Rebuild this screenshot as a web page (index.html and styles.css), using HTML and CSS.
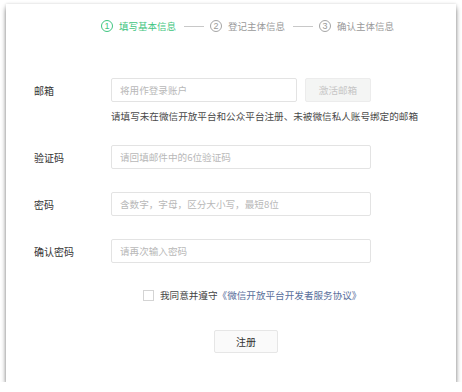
FILE: index.html
```html
<!DOCTYPE html>
<html lang="zh-CN">
<head>
<meta charset="UTF-8">
<title>注册 - 微信开放平台</title>
<meta name="viewport" content="width=device-width, initial-scale=1.0">
<link rel="stylesheet" href="styles.css">
</head>
<body>

<div class="card">
    <div class="steps">
        <div class="step active"><span class="num">1</span>填写基本信息</div>
        <span class="sep"></span>
        <div class="step"><span class="num">2</span>登记主体信息</div>
        <span class="sep"></span>
        <div class="step"><span class="num">3</span>确认主体信息</div>
    </div>

    <div class="form">
        <div class="row">
            <label class="label">邮箱</label>
            <input class="field short" type="text" placeholder="将用作登录账户">
            <button class="btn-activate" type="button">激活邮箱</button>
        </div>
        <p class="hint">请填写未在微信开放平台和公众平台注册、未被微信私人账号绑定的邮箱</p>

        <div class="row gap">
            <label class="label">验证码</label>
            <input class="field" type="text" placeholder="请回填邮件中的6位验证码">
        </div>

        <div class="row gap">
            <label class="label">密码</label>
            <input class="field" type="password" placeholder="含数字，字母，区分大小写，最短8位">
        </div>

        <div class="row gap">
            <label class="label">确认密码</label>
            <input class="field" type="password" placeholder="请再次输入密码">
        </div>

        <div class="agree">
            <span class="box"></span>
            <span>我同意并遵守<a href="#">《微信开放平台开发者服务协议》</a></span>
        </div>

        <div class="submit">
            <button class="btn-submit" type="button">注册</button>
        </div>
    </div>
</div>

</body>
</html>
```

FILE: styles.css
```css
body {
    margin: 0;
    background: #fff;
    font-family: "Noto Sans CJK SC", "Liberation Sans", sans-serif;
    font-size: 10px;
    color: #353535;
}

.card {
    margin: 4px 6px 0 6px;
    width: 450px;
    height: 378px;
    background: #fff;
    box-shadow: 0 4px 5px rgba(0,0,0,0.45), 0 0 3px rgba(0,0,0,0.15);
}

/* 상단 단계 표시 */
.steps {
    display: flex;
    align-items: center;
    padding: 16px 0 0 95px;
    height: 12px;
    color: #9a9a9a;
    line-height: 12px;
}

.step {
    display: flex;
    align-items: center;
    font-size: 9.5px;
}

.step .num {
    display: inline-flex;
    align-items: center;
    justify-content: center;
    width: 10px;
    height: 10px;
    border: 1px solid #a5a5a5;
    border-radius: 50%;
    font-family: "Liberation Sans", sans-serif;
    font-size: 9px;
    line-height: 10px;
    margin-right: 6px;
}

.step.active {
    color: #3fc580;
}

.step.active .num {
    border-color: #3fc580;
}

.sep {
    width: 20px;
    height: 1px;
    background: #c8c8c8;
    margin: 0 6px 0 8px;
}

/* 입력 폼 */
.form {
    margin-top: 46px;
}

.row {
    display: flex;
    align-items: center;
    height: 24px;
}

.row.gap {
    margin-top: 23px;
}

.label {
    width: 77px;
    padding-left: 28px;
    font-size: 10px;
    color: #333;
}

.field {
    box-sizing: border-box;
    width: 260px;
    height: 24px;
    border: 1px solid #e3e3e3;
    border-radius: 2px;
    padding: 0 8px;
    font-family: inherit;
    font-size: 9.6px;
    color: #333;
    outline: none;
}

.field::placeholder {
    color: #b8b8b8;
}

.field.short {
    width: 186px;
}

.btn-activate {
    width: 66px;
    height: 24px;
    margin-left: 8px;
    border: 1px solid #ececec;
    border-radius: 2px;
    background: #f4f5f4;
    color: #c6c6c6;
    font-family: inherit;
    font-size: 9.6px;
}

.hint {
    margin: 8px 0 0 105px;
    line-height: 12px;
    font-size: 9.6px;
    color: #4a4a4a;
}

.agree {
    display: flex;
    align-items: center;
    margin: 25px 0 0 137px;
    height: 14px;
    font-size: 9.6px;
    color: #444;
}

.agree .box {
    box-sizing: border-box;
    width: 11px;
    height: 11px;
    border: 1px solid #d4d4d4;
    margin-right: 6px;
}

.agree a {
    color: #5a6f9c;
    text-decoration: none;
}

.submit {
    margin: 28px 0 0 208px;
}

.btn-submit {
    width: 64px;
    height: 23px;
    border: 1px solid #e6e6e6;
    border-radius: 2px;
    background: #fafafa;
    color: #333;
    font-family: inherit;
    font-size: 10px;
}
```
